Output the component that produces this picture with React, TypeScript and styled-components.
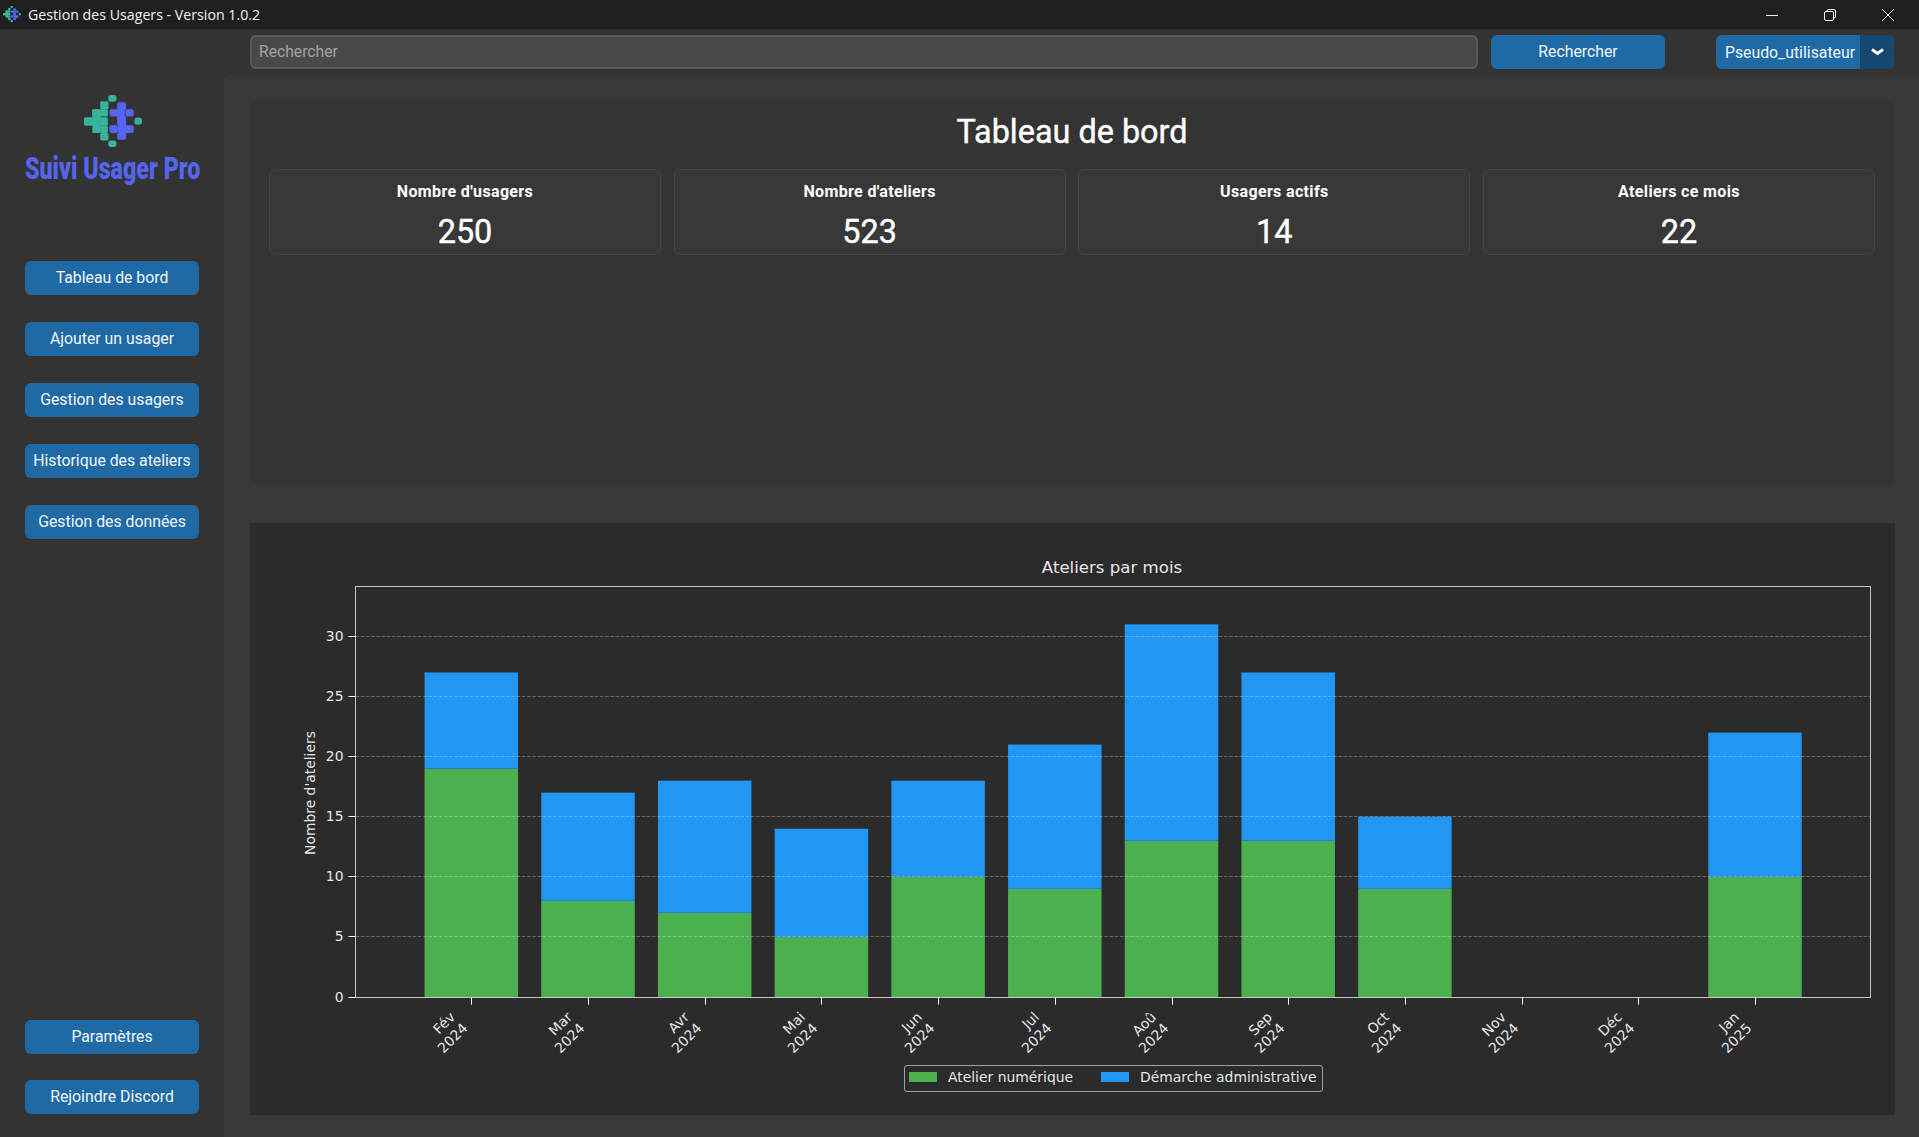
import styled, { createGlobalStyle } from "styled-components";

const GlobalStyle = createGlobalStyle`
  html, body {
    margin: 0;
    padding: 0;
    background: #333333;
  }
  * {
    box-sizing: border-box;
  }
`;

const Window = styled.div`
  width: 1919px;
  height: 1137px;
  display: flex;
  flex-direction: column;
  overflow: hidden;
  font-family: Roboto, "Noto Sans", sans-serif;
  color: #ffffff;
`;

const TitleBar = styled.div`
  height: 29px;
  flex: none;
  display: flex;
  align-items: center;
  background: #1f1f1f;
  padding-left: 3px;
`;

const TitleText = styled.span`
  margin-left: 7px;
  font-family: "Open Sans", sans-serif;
  font-size: 14.2px;
  color: #f2f2f2;
`;

const WindowControls = styled.div`
  margin-left: auto;
  display: flex;
  align-items: center;
  padding-right: 25px;
  gap: 46px;
`;

const Body = styled.div`
  flex: 1;
  display: flex;
  min-height: 0;
`;

const Sidebar = styled.aside`
  width: 224px;
  flex: none;
  display: flex;
  flex-direction: column;
  align-items: center;
  background: #333333;
  padding: 66px 0 23px;
`;

const LogoBlock = styled.div`
  width: 174px;
  height: 166px;
  display: flex;
  flex-direction: column;
  align-items: center;
  padding-left: 2px;
`;

const LogoName = styled.span`
  margin-top: 5px;
  display: block;
  white-space: nowrap;
  font-family: Roboto, sans-serif;
  font-weight: 900;
  font-size: 32px;
  line-height: 32px;
  color: #5565f0;
  transform: scaleX(0.727);
`;

const NavList = styled.nav`
  display: flex;
  flex-direction: column;
  gap: 27px;
`;

const NavBottom = styled(NavList)`
  margin-top: auto;
  gap: 26px;
`;

const BlueButton = styled.button`
  border: none;
  border-radius: 6px;
  background: #1f6aa5;
  color: #f2f6fa;
  font-family: Roboto, sans-serif;
  font-size: 15.8px;
  padding: 0 0 2px;
`;

const NavButton = styled(BlueButton)`
  width: 174px;
  height: 34px;
`;

const Main = styled.main`
  flex: 1;
  min-width: 0;
  display: flex;
  flex-direction: column;
`;

const TopBar = styled.div`
  height: 46px;
  flex: none;
  display: flex;
  align-items: flex-start;
  padding: 6px 25px 0 26px;
  background: #333333;
`;

const SearchInput = styled.input`
  flex: 1;
  min-width: 0;
  height: 34px;
  border: 2px solid #565b5e;
  border-radius: 6px;
  background: #494949;
  color: #ffffff;
  font-family: Roboto, sans-serif;
  font-size: 15.7px;
  padding: 0 7px 2px;
  &::placeholder {
    color: #a3a3a3;
    opacity: 1;
  }
`;

const SearchButton = styled(BlueButton)`
  width: 174px;
  height: 34px;
  margin-left: 13px;
`;

const UserMenu = styled.div`
  width: 178px;
  height: 34px;
  margin-left: 51px;
  display: flex;
  border-radius: 6px;
  overflow: hidden;
  background: #1f6aa5;
`;

const UserName = styled.span`
  flex: 1;
  display: flex;
  align-items: center;
  justify-content: center;
  padding-left: 4px;
  font-size: 15.8px;
  color: #f2f6fa;
`;

const UserArrow = styled.span`
  width: 34px;
  flex: none;
  display: flex;
  align-items: center;
  justify-content: center;
  background: #144870;
`;

const Content = styled.div`
  flex: 1;
  min-height: 0;
  display: flex;
  flex-direction: column;
  gap: 38px;
  padding: 25px 24px 22px 26px;
  background: #383838;
  border-top-left-radius: 6px;
`;

const StatsPanel = styled.section`
  height: 385px;
  flex: none;
  border-radius: 6px;
  background: #343434;
  padding: 0 20px 0 19px;
`;

const PageTitle = styled.h1`
  margin: 0;
  height: 69px;
  display: flex;
  align-items: center;
  justify-content: center;
  padding-bottom: 5px;
  font-size: 32.4px;
  font-weight: 400;
  -webkit-text-stroke: 0.4px #ffffff;
  color: #ffffff;
`;

const StatsRow = styled.div`
  display: grid;
  grid-template-columns: repeat(4, 392px);
  gap: 12.67px;
`;

const StatCard = styled.div`
  height: 86px;
  display: flex;
  flex-direction: column;
  align-items: center;
  border: 1px solid #444444;
  border-radius: 6px;
  background: #383838;
  padding-top: 12px;
`;

const StatLabel = styled.span`
  font-size: 16px;
  line-height: 20px;
  font-weight: 700;
  letter-spacing: 0.35px;
  color: #ffffff;
`;

const StatValue = styled.span`
  margin-top: 11px;
  font-size: 32.4px;
  line-height: 38px;
  font-weight: 400;
  -webkit-text-stroke: 0.4px #ffffff;
  color: #ffffff;
`;

const ChartPanel = styled.section`
  height: 592px;
  flex: none;
  background: #2b2b2b;
`;

const ChartSvg = styled.svg`
  display: block;
  text {
    font-family: "DejaVu Sans", sans-serif;
    fill: #e6e6e6;
  }
`;

const stats = [
  { label: "Nombre d'usagers", value: 250 },
  { label: "Nombre d'ateliers", value: 523 },
  { label: "Usagers actifs", value: 14 },
  { label: "Ateliers ce mois", value: 22 },
];

const months = [
  { month: "Fév", year: 2024, green: 19, total: 27 },
  { month: "Mar", year: 2024, green: 8, total: 17 },
  { month: "Avr", year: 2024, green: 7, total: 18 },
  { month: "Mai", year: 2024, green: 5, total: 14 },
  { month: "Jun", year: 2024, green: 10, total: 18 },
  { month: "Jul", year: 2024, green: 9, total: 21 },
  { month: "Aoû", year: 2024, green: 13, total: 31 },
  { month: "Sep", year: 2024, green: 13, total: 27 },
  { month: "Oct", year: 2024, green: 9, total: 15 },
  { month: "Nov", year: 2024, green: 0, total: 0 },
  { month: "Déc", year: 2024, green: 0, total: 0 },
  { month: "Jan", year: 2025, green: 10, total: 22 },
];

function LogoMark({ size }: { size: number }) {
  return (
    <svg width={size} height={(size * 157) / 175} viewBox="253 285 175 157">
      <g fill="#36b39a">
        <rect x="326" y="285" width="25" height="20" rx="8" />
        <rect x="302" y="304" width="25" height="24" rx="4" />
        <rect x="278" y="328" width="47" height="22" rx="4" />
        <rect x="253" y="352" width="72" height="26" rx="5" />
        <rect x="278" y="328" width="25" height="72" rx="4" />
        <rect x="302" y="378" width="23" height="22" rx="4" />
        <rect x="302" y="400" width="25" height="22" rx="4" />
        <rect x="326" y="422" width="25" height="20" rx="8" />
        <rect x="405" y="353" width="23" height="22" rx="10" />
      </g>
      <g fill="#5566f5">
        <rect x="353" y="307" width="27" height="24" rx="6" />
        <rect x="330" y="328" width="46" height="22" rx="6" />
        <rect x="378" y="328" width="25" height="22" rx="6" />
        <rect x="353" y="348" width="27" height="30" rx="4" />
        <rect x="330" y="376" width="25" height="24" rx="6" />
        <rect x="355" y="376" width="48" height="24" rx="6" />
        <rect x="353" y="398" width="27" height="22" rx="6" />
      </g>
    </svg>
  );
}

// plot area, in the chart panel's own coordinates
const PLOT_LEFT = 105.5;
const PLOT_RIGHT = 1620.5;
const PLOT_TOP = 63.5;
const PLOT_BOTTOM = 474.5;
const BASELINE = 474;
const UNIT = 12.02;
const FIRST_TICK = 221.3;
const TICK_STEP = 116.7;
const BAR_WIDTH = 93.5;

function AteliersChart() {
  const yOf = (v: number) => BASELINE - v * UNIT;
  const yTicks = [0, 5, 10, 15, 20, 25, 30];

  return (
    <ChartSvg width={1645} height={592} viewBox="0 0 1645 592">
      <text x={862} y={50} fontSize={16.6} textAnchor="middle">
        Ateliers par mois
      </text>

      {months.map((m, i) => {
        const left = FIRST_TICK + i * TICK_STEP - BAR_WIDTH / 2;
        return (
          <g key={m.month}>
            <rect
              x={left}
              y={yOf(m.green)}
              width={BAR_WIDTH}
              height={m.green * UNIT}
              fill="#4caf50"
            />
            <rect
              x={left}
              y={yOf(m.total)}
              width={BAR_WIDTH}
              height={(m.total - m.green) * UNIT}
              fill="#2196f3"
            />
          </g>
        );
      })}

      {yTicks.map((v) => {
        const y = Math.floor(yOf(v)) + 0.5;
        return (
          <g key={v}>
            {v > 0 && (
              <line
                x1={PLOT_LEFT}
                x2={PLOT_RIGHT}
                y1={y}
                y2={y}
                stroke="#ffffff"
                strokeOpacity={0.28}
                strokeDasharray="3.7 1.5"
              />
            )}
            <line x1={PLOT_LEFT - 7} x2={PLOT_LEFT} y1={y} y2={y} stroke="#ffffff" />
            <text x={PLOT_LEFT - 12} y={y + 4.5} fontSize={13.9} textAnchor="end">
              {v}
            </text>
          </g>
        );
      })}

      <rect
        x={PLOT_LEFT}
        y={PLOT_TOP}
        width={PLOT_RIGHT - PLOT_LEFT}
        height={PLOT_BOTTOM - PLOT_TOP}
        fill="none"
        stroke="#c4c4c4"
      />

      {months.map((m, i) => {
        const x = Math.round(FIRST_TICK + i * TICK_STEP) + 0.5;
        return (
          <g key={m.month}>
            <line x1={x} x2={x} y1={PLOT_BOTTOM} y2={PLOT_BOTTOM + 7} stroke="#ffffff" />
            <text
              fontSize={13.9}
              textAnchor="end"
              dy="0.35em"
              transform={`translate(${x - 19} ${PLOT_BOTTOM + 17}) rotate(-45)`}
            >
              {m.month}
            </text>
            <text
              fontSize={13.9}
              textAnchor="end"
              dy="0.35em"
              transform={`translate(${x - 6.5} ${PLOT_BOTTOM + 28}) rotate(-45)`}
            >
              {m.year}
            </text>
          </g>
        );
      })}

      <text
        fontSize={13.9}
        textAnchor="middle"
        transform="translate(65 270) rotate(-90)"
      >
        Nombre d'ateliers
      </text>

      <rect
        x={654.5}
        y={542.5}
        width={418}
        height={26}
        rx={2.5}
        fill="#2b2b2b"
        stroke="#a0a0a0"
      />
      <rect x={659} y={549} width={28} height={10} fill="#4caf50" />
      <text x={698} y={559} fontSize={13.9}>
        Atelier numérique
      </text>
      <rect x={851} y={549} width={28} height={10} fill="#2196f3" />
      <text x={890} y={559} fontSize={13.9}>
        Démarche administrative
      </text>
    </ChartSvg>
  );
}

export default function App() {
  return (
    <Window>
      <GlobalStyle />
      <TitleBar>
        <LogoMark size={18} />
        <TitleText>Gestion des Usagers - Version 1.0.2</TitleText>
        <WindowControls>
          <svg width="12" height="12" viewBox="0 0 12 12">
            <path d="M0 6.5h12" stroke="#f0f0f0" fill="none" />
          </svg>
          <svg width="12" height="12" viewBox="0 0 12 12">
            <rect x="0.5" y="2.5" width="9" height="9" rx="1.5" stroke="#f0f0f0" fill="none" />
            <path d="M3 2.2V2a1.5 1.5 0 0 1 1.5-1.5H10A1.5 1.5 0 0 1 11.5 2v5.5A1.5 1.5 0 0 1 10 9h-.2" stroke="#f0f0f0" fill="none" />
          </svg>
          <svg width="12" height="12" viewBox="0 0 12 12">
            <path d="M0 0l12 12M12 0L0 12" stroke="#f0f0f0" fill="none" />
          </svg>
        </WindowControls>
      </TitleBar>
      <Body>
        <Sidebar>
          <LogoBlock>
            <LogoMark size={58} />
            <LogoName>Suivi Usager Pro</LogoName>
          </LogoBlock>
          <NavList>
            <NavButton>Tableau de bord</NavButton>
            <NavButton>Ajouter un usager</NavButton>
            <NavButton>Gestion des usagers</NavButton>
            <NavButton>Historique des ateliers</NavButton>
            <NavButton>Gestion des données</NavButton>
          </NavList>
          <NavBottom>
            <NavButton>Paramètres</NavButton>
            <NavButton>Rejoindre Discord</NavButton>
          </NavBottom>
        </Sidebar>
        <Main>
          <TopBar>
            <SearchInput placeholder="Rechercher" />
            <SearchButton>Rechercher</SearchButton>
            <UserMenu>
              <UserName>Pseudo_utilisateur</UserName>
              <UserArrow>
                <svg width="13" height="8" viewBox="0 0 13 8">
                  <path d="M1 1.5L6.5 5.5l5.5-4" stroke="#ffffff" strokeWidth="2.8" fill="none" />
                </svg>
              </UserArrow>
            </UserMenu>
          </TopBar>
          <Content>
            <StatsPanel>
              <PageTitle>Tableau de bord</PageTitle>
              <StatsRow>
                {stats.map((s) => (
                  <StatCard key={s.label}>
                    <StatLabel>{s.label}</StatLabel>
                    <StatValue>{s.value}</StatValue>
                  </StatCard>
                ))}
              </StatsRow>
            </StatsPanel>
            <ChartPanel>
              <AteliersChart />
            </ChartPanel>
          </Content>
        </Main>
      </Body>
    </Window>
  );
}
